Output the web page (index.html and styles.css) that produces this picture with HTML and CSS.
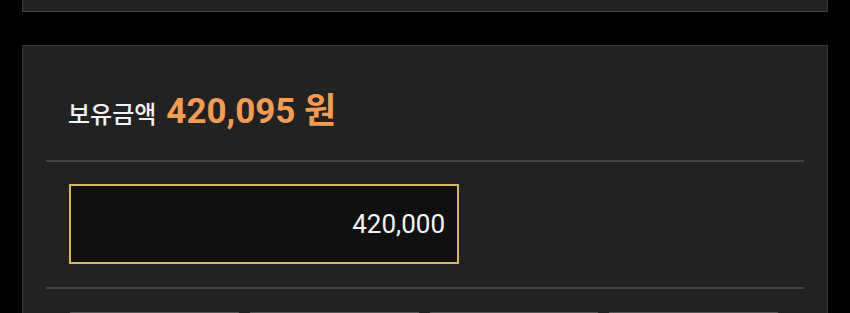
FILE: index.html
```html
<!DOCTYPE html>
<html lang="ko">
<head>
    <meta charset="UTF-8">
    <meta name="viewport" content="width=device-width, initial-scale=1.0">
    <title>보유금액</title>
    <link rel="stylesheet" href="styles.css">
</head>
<body>
    <div class="card card-prev"></div>

    <div class="card">
        <div class="balance">
            <span class="balance-label">보유금액</span>
            <span class="balance-amount">420,095 원</span>
        </div>

        <div class="amount-row">
            <div class="amount-input">420,000</div>
        </div>

        <!-- quick add buttons, only their top edge is on screen -->
        <div class="quick-buttons">
            <button class="quick-btn" aria-label="+1만"></button>
            <button class="quick-btn" aria-label="+5만"></button>
            <button class="quick-btn" aria-label="+10만"></button>
            <button class="quick-btn" aria-label="+50만"></button>
        </div>
    </div>
</body>
</html>
```

FILE: styles.css
```css
body {
    margin: 0;
    padding: 0 22px;
    background-color: #000;
    font-family: Roboto, "Noto Sans CJK KR", sans-serif;
    color: #eee;
    overflow: hidden;
}
.card {
    background-color: #232223;
    border: 1px solid #3a3a3a;
    padding: 0 23px;
}
.card-prev {
    height: 11px;
    border-top: none;
    border-bottom-color: #454545;
    margin-bottom: 33px;
}
.balance {
    display: flex;
    align-items: baseline;
    gap: 10px;
    padding: 46px 22px 27px;
    line-height: 40px;
    border-bottom: 2px solid #444;
}
.balance-label {
    font-family: "Noto Sans CJK KR", sans-serif;
    font-size: 24px;
    font-weight: 500;
    color: #f2f2f2;
}
.balance-amount {
    font-size: 35px;
    font-weight: bold;
    color: #f39c53;
}
.amount-row {
    padding: 22px 23px 23px;
    border-bottom: 2px solid #444;
}
.amount-input {
    box-sizing: border-box;
    width: 390px;
    height: 80px;
    background-color: #111011;
    border: 2px solid #d8b75e;
    padding: 0 12px;
    display: flex;
    align-items: center;
    justify-content: flex-end;
    font-size: 26px;
    color: #f5f5f5;
}
.quick-buttons {
    display: grid;
    grid-template-columns: repeat(4, 1fr);
    gap: 11px;
    padding: 23px 26px 0 24px;
}
.quick-btn {
    height: 48px;
    background-color: #2e2d2e;
    border: none;
    border-top: 2px solid #555;
}
```
